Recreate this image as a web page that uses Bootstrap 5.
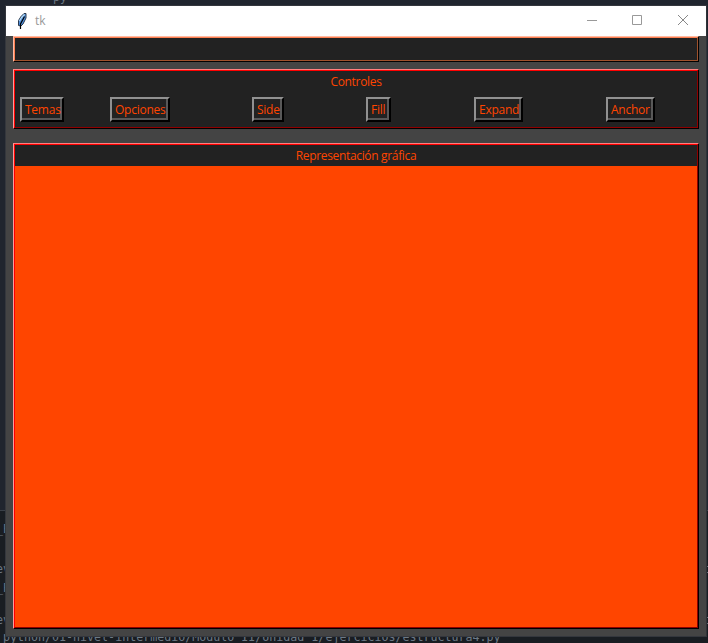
<!DOCTYPE html>
<html lang="es">
<head>
<meta charset="utf-8">
<title>tk</title>
<meta name="viewport" content="width=device-width, initial-scale=1">
<link href="https://cdn.jsdelivr.net/npm/bootstrap@5.3.0/dist/css/bootstrap.min.css" rel="stylesheet">
<style>
body{width:708px;height:643px;background:linear-gradient(#20252e 0 510px,#3a4048 510px 511px,#191d22 511px);font:12px/16px "Open Sans","Noto Sans",sans-serif;color:#ff4500}
.desk{padding:5px 1px 6px 5px;height:643px}
.code{position:absolute;font:11.65px/14px "DejaVu Sans Mono",monospace;color:#6c7884;white-space:pre}
.dash{position:absolute;left:706px;width:2px;height:7px;border:solid #68707a;border-width:1px 0}
.tkwin{z-index:1;height:632px;background:#444;border:1px solid #34373d;border-right-color:#303338}
.titlebar{height:30px;background:#fff;color:#999;padding-left:11px}
.wbtn{width:46px;height:30px;display:block;position:relative;left:1px}
.feather{width:12px;height:18px;margin-right:6px}
.cbody{padding:0 7px}
.panel{background:#222;border:1px solid;border-color:#ff8080 #000 #000 #ff9c9c}
.inner{border:1px solid;border-color:red #900000 #900000 red;height:100%}
.p1{height:26px;margin-bottom:7px;border-color:#ffbba4 #000 #000 #ffbba4}
.p1 .inner{border-color:#ff7f50 #a0522d #a0522d #ff7f50}
.p2{height:60px;margin-bottom:14px}
.p3{height:486px}
.cap{text-align:center}
.p2 .cap{padding-top:3px;height:26px}
.p3 .cap{padding-top:3px;height:21px}
.ctl{height:25px;border:2px solid;border-color:#919191 #000 #000 #919191;background:#222;padding:0}
.ctl span{display:block;height:21px;border:solid #585858;border-width:0 2px 2px 0;padding-left:3px;line-height:22px;white-space:nowrap}
.controls{padding-left:5px}
.c1{width:44px;margin-right:46px}.c2{width:60px;margin-right:82px}.c3{width:32px;margin-right:82px}.c4{width:25px;margin-right:83px}.c5{width:49px;margin-right:83px}.c6{width:49px}
.canvas{background:#ff4500}
.t{letter-spacing:-.33px}
.ctl .t{letter-spacing:-.25px}
</style>
<script src="https://cdn.jsdelivr.net/npm/bootstrap@5.3.0/dist/js/bootstrap.bundle.min.js"></script>
</head>
<body class="overflow-hidden position-relative">
<div class="code" style="left:53px;top:-10px">py</div>
<div class="code" style="left:-4px;top:522px">_E</div>
<div class="code" style="left:-4px;top:562px">ev</div>
<div class="code" style="left:-4px;top:581px">_P</div>
<div class="code" style="left:-4px;top:613px">ev</div>
<div class="code" style="left:3px;top:630px">python/01-nivel-intermedio/Modulo II/Unidad 1/ejercicios/estructura4.py</div>
<i class="dash" style="top:566px"></i><i class="dash" style="top:617px"></i>
<main class="desk">
<div class="tkwin position-relative d-flex flex-column">
<header class="titlebar d-flex align-items-center">
<svg class="feather" viewBox="0 0 12 18"><path d="M1.500 13.500V8.500L4 4.500 7 1.500H9V6L6 12 4 14z" fill="#4f90e0" stroke="#2c3a4c"/><path d="M2.500 9L4.500 5.500 7.500 2.500" stroke="#b9dcf2" stroke-width="1.200" fill="none"/><path d="M3.500 17V12L7.500 4.500" stroke="#000" stroke-width="1.200" fill="none"/></svg>
<span class="me-auto">tk</span>
<svg class="wbtn" viewBox="0 0 46 30"><path d="M18 14.500h10" stroke="#999"/></svg>
<svg class="wbtn" viewBox="0 0 46 30"><path d="M17.500 9.500h9v9h-9z" fill="none" stroke="#999"/></svg>
<svg class="wbtn" viewBox="0 0 46 30"><path d="M17 9l10 10M27 9L17 19" stroke="#888"/></svg>
</header>
<div class="cbody">
<section class="panel p1"><div class="inner"></div></section>
<section class="panel p2"><div class="inner">
<div class="cap"><span class="t">Controles</span></div>
<div class="controls d-flex">
<div class="ctl c1"><span class="t">Temas</span></div>
<div class="ctl c2"><span class="t">Opciones</span></div>
<div class="ctl c3"><span class="t">Side</span></div>
<div class="ctl c4"><span class="t">Fill</span></div>
<div class="ctl c5"><span class="t">Expand</span></div>
<div class="ctl c6"><span class="t">Anchor</span></div>
</div></div></section>
<section class="panel p3"><div class="inner d-flex flex-column">
<div class="cap"><span class="t">Representación gráfica</span></div>
<div class="canvas flex-grow-1"></div>
</div></section>
</div>
</div>
</main>
</body>
</html>
